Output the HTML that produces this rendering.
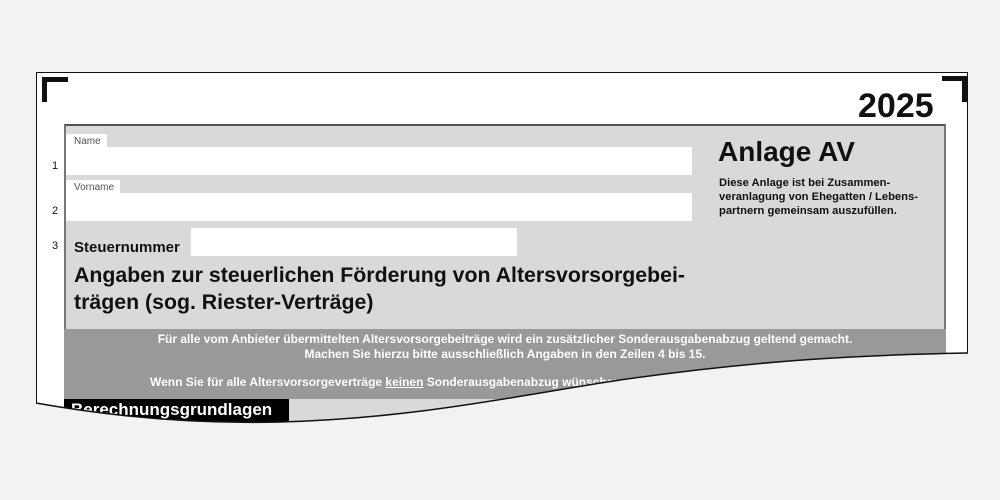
<!DOCTYPE html>
<html><head><style>
body{margin:0;width:1000px;height:500px;background:#f3f2f0;position:relative;overflow:hidden;font-family:"Liberation Sans",Arial,sans-serif}
.a{position:absolute}
.page{left:36px;top:72px;width:932px;height:400px;background:#fff;border:1px solid #111;box-sizing:border-box}
.gray{left:64px;top:124px;width:882px;height:300px;background:#d9d9d9;border-top:2px solid #555;border-left:2px solid #777;border-right:2px solid #777;box-sizing:border-box}
.field{background:#fff}
.lbl{font-size:10px;color:#555;background:#fff;padding:2px 6px 0 8px}
.num{font-size:11px;color:#111}
.dark{left:64px;top:329px;width:882px;height:70px;background:#999;color:#fff;font-size:12px;font-weight:bold;text-align:center;white-space:nowrap}
</style></head><body>
<div class="a page"></div>
<div class="a" style="left:42px;top:77px;width:26px;height:5px;background:#111"></div>
<div class="a" style="left:42px;top:77px;width:5px;height:25px;background:#111"></div>
<div class="a" style="left:942px;top:76px;width:26px;height:5px;background:#111"></div>
<div class="a" style="left:962px;top:76px;width:5px;height:26px;background:#111"></div>
<div class="a" style="left:858px;top:87px;font-size:34px;font-weight:bold;color:#111">2025</div>
<div class="a gray"></div>
<div class="a lbl" style="left:66px;top:134px">Name</div>
<div class="a field" style="left:66px;top:147px;width:626px;height:28px"></div>
<div class="a lbl" style="left:66px;top:180px">Vorname</div>
<div class="a field" style="left:66px;top:193px;width:626px;height:28px"></div>
<div class="a num" style="left:52px;top:160px">1</div>
<div class="a num" style="left:52px;top:205px">2</div>
<div class="a num" style="left:52px;top:240px">3</div>
<div class="a" style="left:74px;top:239px;font-size:15px;font-weight:bold;color:#111">Steuernummer</div>
<div class="a field" style="left:191px;top:228px;width:326px;height:28px"></div>
<div class="a" style="left:74px;top:262px;font-size:21.3px;font-weight:bold;color:#111;line-height:27px;white-space:nowrap">Angaben zur steuerlichen Förderung von Altersvorsorgebei-<br>trägen (sog. Riester-Verträge)</div>
<div class="a" style="left:718px;top:136px;font-size:28px;font-weight:bold;color:#111">Anlage AV</div>
<div class="a" style="left:719px;top:176px;font-size:11.2px;font-weight:bold;color:#111;line-height:14px;white-space:nowrap">Diese Anlage ist bei Zusammen-<br>veranlagung von Ehegatten / Lebens-<br>partnern gemeinsam auszufüllen.</div>
<div class="a dark"><div style="margin-top:3px;line-height:15px">Für alle vom Anbieter übermittelten Altersvorsorgebeiträge wird ein zusätzlicher Sonderausgabenabzug geltend gemacht.<br>Machen Sie hierzu bitte ausschließlich Angaben in den Zeilen 4 bis 15.</div>
<div style="margin-top:13px;text-align:left;padding-left:86px">Wenn Sie für alle Altersvorsorgeverträge <u>keinen</u> Sonderausgabenabzug wünschen, ...</div></div>
<div class="a" style="left:64px;top:399px;width:225px;height:24px;background:#000;color:#fff;font-size:17px;font-weight:bold;padding-left:7px;box-sizing:border-box;line-height:22px">Berechnungsgrundlagen</div>
<svg class="a" style="left:0;top:0" width="1000" height="500">
<path d="M36,403 C120,418 200,424 280,422 C420,418 520,395 620,380 C760,360 860,355 968,353 L1000,353 L1000,500 L0,500 L0,403 Z" fill="#f3f2f0"/>
<path d="M36,403 C120,418 200,424 280,422 C420,418 520,395 620,380 C760,360 860,355 968,353" fill="none" stroke="#111" stroke-width="1.5"/>
<rect x="0" y="353" width="36" height="147" fill="#f3f2f0"/>
</svg>
</body></html>
